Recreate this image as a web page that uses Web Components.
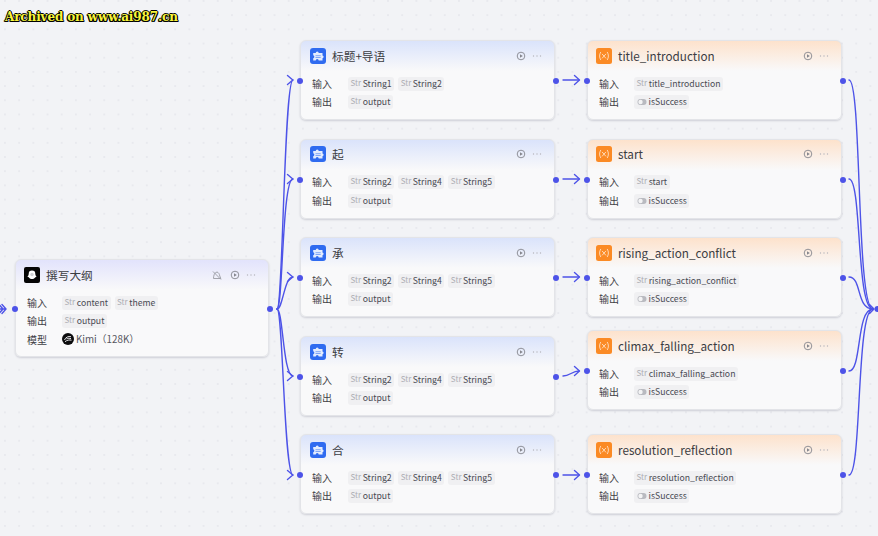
<!DOCTYPE html>
<html lang="zh"><head><meta charset="utf-8"><style>
html,body{margin:0;padding:0;width:878px;height:536px;overflow:hidden;background:#f2f3f6}
body{font-family:"Noto Sans CJK SC","Noto Sans",sans-serif}
</style></head><body>
<wf-canvas>
<wf-node x="15" y="259" w="254" h="98" kind="llm" title-text="撰写大纲" extra>
  <wf-row label="输入"><wf-chip>content</wf-chip><wf-chip>theme</wf-chip></wf-row>
  <wf-row label="输出"><wf-chip>output</wf-chip></wf-row>
  <wf-row label="模型"><wf-model>Kimi（128K）</wf-model></wf-row>
</wf-node>
<wf-node x="300" y="40" kind="plugin" title-text="标题+导语"><wf-row label="输入"><wf-chip>String1</wf-chip><wf-chip>String2</wf-chip></wf-row><wf-row label="输出"><wf-chip>output</wf-chip></wf-row></wf-node>
<wf-node x="300" y="138.500" kind="plugin" title-text="起"><wf-row label="输入"><wf-chip>String2</wf-chip><wf-chip>String4</wf-chip><wf-chip>String5</wf-chip></wf-row><wf-row label="输出"><wf-chip>output</wf-chip></wf-row></wf-node>
<wf-node x="300" y="237" kind="plugin" title-text="承"><wf-row label="输入"><wf-chip>String2</wf-chip><wf-chip>String4</wf-chip><wf-chip>String5</wf-chip></wf-row><wf-row label="输出"><wf-chip>output</wf-chip></wf-row></wf-node>
<wf-node x="300" y="336" kind="plugin" title-text="转"><wf-row label="输入"><wf-chip>String2</wf-chip><wf-chip>String4</wf-chip><wf-chip>String5</wf-chip></wf-row><wf-row label="输出"><wf-chip>output</wf-chip></wf-row></wf-node>
<wf-node x="300" y="434" kind="plugin" title-text="合"><wf-row label="输入"><wf-chip>String2</wf-chip><wf-chip>String4</wf-chip><wf-chip>String5</wf-chip></wf-row><wf-row label="输出"><wf-chip>output</wf-chip></wf-row></wf-node>
<wf-node x="587" y="40" kind="var" title-text="title_introduction"><wf-row label="输入"><wf-chip>title_introduction</wf-chip></wf-row><wf-row label="输出"><wf-chip type="bool">isSuccess</wf-chip></wf-row></wf-node>
<wf-node x="587" y="138.500" kind="var" title-text="start"><wf-row label="输入"><wf-chip>start</wf-chip></wf-row><wf-row label="输出"><wf-chip type="bool">isSuccess</wf-chip></wf-row></wf-node>
<wf-node x="587" y="237" kind="var" title-text="rising_action_conflict"><wf-row label="输入"><wf-chip>rising_action_conflict</wf-chip></wf-row><wf-row label="输出"><wf-chip type="bool">isSuccess</wf-chip></wf-row></wf-node>
<wf-node x="587" y="330" kind="var" title-text="climax_falling_action"><wf-row label="输入"><wf-chip>climax_falling_action</wf-chip></wf-row><wf-row label="输出"><wf-chip type="bool">isSuccess</wf-chip></wf-row></wf-node>
<wf-node x="587" y="434" kind="var" title-text="resolution_reflection"><wf-row label="输入"><wf-chip>resolution_reflection</wf-chip></wf-row><wf-row label="输出"><wf-chip type="bool">isSuccess</wf-chip></wf-row></wf-node>
</wf-canvas>
<script>
const FONT='"Noto Sans CJK SC","Noto Sans",sans-serif';
class WfCanvas extends HTMLElement{
  constructor(){super();
    const C='#4d53e8';
    const src=[80,179,277,376,475];
    const rightY=[80,179,277,371,475];
    let p='';
    for(const y of src){
      const d=y<309?`M277 309C${y===277?'283 309 284 277 293 277':(y===179?'283 309 282 179 293 179':'283 309 284 80 293 80')}`:`M277 309C283 309 ${y===376?'283':'284'} ${y} 293 ${y}`;
      p+=`<path d="${d}"/><path d="M287.500 ${y-4.500}L292.800 ${y}L287.500 ${y+4.500}"/>`;
    }
    src.forEach((y,i)=>{const e=rightY[i];
      p+=`<path d="M563 ${y}C570 ${y} 572 ${e} 579 ${e}"/><path d="M574.500 ${e-4.500}L579.500 ${e}L574.500 ${e+4.500}"/>`;
      p+=`<path d="M849 ${e}C862 ${e} 856 309 873 309"/>`;
    });
    p+=`<path d="M2 304.500L6 309L2 313.500M-1 304.500L3 309L-1 313.500M0 309H6"/><path d="M869.500 304.500L874 309L869.500 313.500"/>`;
    this.attachShadow({mode:'open'}).innerHTML=`<style>
      :host{display:block;position:relative;width:878px;height:536px;overflow:hidden;
        background-color:#f2f3f6;background-image:radial-gradient(circle at 1px 1px,#e8e9ee .8px,transparent 1.200px);background-size:14.2px 14.2px;background-position:4px 0}
      .stamp{position:absolute;left:5px;top:8px;font:bold 12px/18px "DejaVu Serif",serif;letter-spacing:-.13px;color:#f7f43a;
        text-shadow:1px 0 0 #000,-1px 0 0 #000,0 1px 0 #000,0 -1px 0 #000,1px 1px 0 #000,-1px 1px 0 #000}
      svg{position:absolute;left:0;top:0;fill:none;stroke:${C};stroke-width:1.400;stroke-linecap:round;stroke-linejoin:round}
    </style><span class="stamp">Archived on www.ai987.cn</span><slot></slot>
    <svg width="878" height="536" viewBox="0 0 878 536">${p}<circle cx="877.500" cy="309" r="3" fill="${C}" stroke="none"/></svg>`;
  }
}
const ICONS={
 llm:`<svg viewBox="0 0 16 16" width="16" height="16"><rect width="16" height="16" rx="2" fill="#050505"/><path d="M8 3.500a3.300 3.300 0 0 1 3.300 3.400c0 1 .9 2.300 1.400 3.100-.8.200-1.300.100-1.800.700-.6.700-1.700 1.300-2.900 1.300s-2.300-.6-2.900-1.300c-.5-.6-1-.5-1.800-.7.500-.8 1.400-2.100 1.400-3.100A3.300 3.300 0 0 1 8 3.500z" fill="#fff"/><circle cx="8" cy="7.500" r="1.700" fill="#cfd0d4"/></svg>`,
 plugin:`<svg viewBox="0 0 16 16" width="16" height="16"><rect width="16" height="16" rx="3" fill="#2f6bf0"/><path d="M3.200 5h2.500a1.500 1.500 0 0 1 3 0h3.800v2.400a1.500 1.500 0 0 1 0 2.900v2.200H8.700a1.500 1.500 0 0 0-3 0H3.200v-2.300a1.500 1.500 0 0 0 0-2.900z" fill="#e3ecfe"/><path d="M5.500 7.700h5.200M5.500 9.500h5.200" stroke="#7fa6f6" stroke-width="1"/></svg>`,
 var:`<svg viewBox="0 0 16 16" width="16" height="16"><rect width="16" height="16" rx="2.500" fill="#fb8a24"/><path d="M4.600 4.300C3.200 6.500 3.200 9.500 4.600 11.700M11.400 4.300c1.400 2.200 1.400 5.200 0 7.400M6.300 6.200l3.400 3.900M9.700 6.200l-3.400 3.900" stroke="#ffd9b5" stroke-width="1" fill="none" stroke-linecap="round"/></svg>`
};
const HEAD={llm:'#e2e3fc',plugin:'#dae3fb',var:'#fde2cc'};
class WfNode extends HTMLElement{
  constructor(){super();
    const k=this.getAttribute('kind'),x=this.getAttribute('x'),y=this.getAttribute('y'),w=this.getAttribute('w')||255,h=this.getAttribute('h')||80;
    const extra=this.hasAttribute('extra')?`<svg class="a" viewBox="0 0 10 10" width="10" height="10" style="margin-right:2px"><path d="M1.500 8.500c0-3 1-6 3.500-6.500 1.500.3 2.400 2 2.800 4l1 2.500zM1 1.500l8 8" fill="none" stroke="#9a9ba3" stroke-width=".9"/></svg>`:'';
    this.attachShadow({mode:'open'}).innerHTML=`<style>
      :host{display:block;position:absolute;left:${x}px;top:${y}px;width:${w}px;height:${h}px;box-sizing:border-box;
        background:linear-gradient(${HEAD[k]} 0,#f9f9fa 30px);border:1px solid #e3e4e8;border-radius:6px;box-shadow:0 1px 2px rgba(30,32,60,.17);
        font-family:${FONT};color:#3f4045;--lw:${k==='plugin'?36:35}px}
      header{display:flex;align-items:center;height:29px;padding:0 12px 0 ${k==='plugin'?9:8}px}
      .ic{width:16px;height:16px;flex:none;display:flex}
      h1{flex:1;margin:0 0 0 6px;font-size:11.700px;font-weight:400;line-height:16px;color:#3b3c42;white-space:nowrap}
      .acts{display:flex;align-items:center;gap:6px}
      .body{display:flex;flex-direction:column;padding-top:4px}
      .dot{position:absolute;width:6px;height:6px;border-radius:50%;background:#4d53e8;top:${k==='llm'?46:37}px}
      .l{left:-4px}.r{right:-5px}
    </style>
    <header><span class="ic">${ICONS[k]}</span><h1>${this.getAttribute('title-text')}</h1>
      <span class="acts">${extra}<svg viewBox="0 0 10 10" width="10" height="10"><circle cx="5" cy="5" r="3.800" fill="none" stroke="#85868d" stroke-width=".9"/><path d="M4 3.200L6.800 5L4 6.800z" fill="#85868d"/></svg>
      <svg viewBox="0 0 10 10" width="10" height="10"><g fill="#b4b5bb"><circle cx="1.500" cy="5" r=".7"/><circle cx="5" cy="5" r=".7"/><circle cx="8.500" cy="5" r=".7"/></g></svg></span></header>
    <div class="body"><slot></slot></div><i class="dot l"></i><i class="dot r"></i>`;
  }
}
class WfRow extends HTMLElement{
  constructor(){super();
    this.attachShadow({mode:'open'}).innerHTML=`<style>
      :host{display:flex;align-items:center;height:18.500px;padding-left:11px;font-size:10px;color:#3f4045}
      b{font-weight:400;width:var(--lw);flex:none;font-size:10px}
      div{display:flex;gap:4px;align-items:center}
    </style><b>${this.getAttribute('label')}</b><div><slot></slot></div>`;
  }
}
class WfChip extends HTMLElement{
  constructor(){super();
    const bool=this.getAttribute('type')==='bool';
    const lead=bool?`<svg viewBox="0 0 10 8" width="10" height="8"><rect x=".5" y="1" width="9" height="6" rx="3" fill="#b9bac0"/><circle cx="3.500" cy="4" r="2.200" fill="#f4f4f5"/></svg>`:`<span class="t">Str</span>`;
    this.attachShadow({mode:'open'}).innerHTML=`<style>
      :host{display:inline-flex;align-items:center;height:14px;padding:0 2.500px;background:#f0f0f2;border-radius:3px;font-size:8.700px;line-height:14px;color:#494a52;white-space:nowrap;font-family:"Noto Sans CJK SC","Noto Sans",sans-serif;position:relative;top:.5px}
      .t{font-size:8px;color:#adaeb4;margin-right:1.500px;position:relative;top:-1px}
      svg{margin-right:2px}
    </style>${lead}<slot></slot>`;
  }
}
class WfModel extends HTMLElement{
  constructor(){super();
    this.attachShadow({mode:'open'}).innerHTML=`<style>
      :host{display:inline-flex;align-items:center;gap:2px;font-size:9.800px;color:#55565e;white-space:nowrap}
    </style><svg viewBox="0 0 12 12" width="12" height="12"><circle cx="6" cy="6" r="6" fill="#0c0c0e"/><path d="M2.500 7c1-2.800 4-4 6.500-3.300M3 8.700c2-1.700 4.500-2 6.500-1.500M4.500 5.800c1.500-.6 3-.6 4.500-.2" stroke="#e8e8ea" stroke-width="1" fill="none"/></svg><slot></slot>`;
  }
}
customElements.define('wf-canvas',WfCanvas);
customElements.define('wf-node',WfNode);
customElements.define('wf-row',WfRow);
customElements.define('wf-chip',WfChip);
customElements.define('wf-model',WfModel);
</script>
</body></html>
